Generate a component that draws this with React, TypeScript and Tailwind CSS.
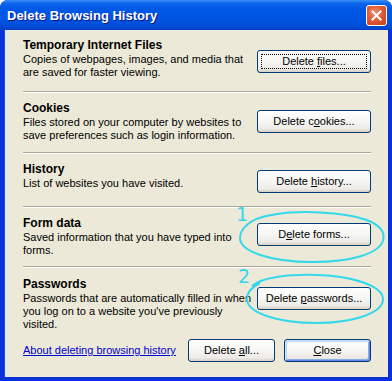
import type { ReactNode } from "react";

type BtnProps = {
  children: ReactNode;
  className?: string;
  focused?: boolean;
  isDefault?: boolean;
};

function XpButton({ children, className = "", focused, isDefault }: BtnProps) {
  return (
    <button
      className={
        "relative flex h-[23px] items-center justify-center rounded-[3px] border border-[#003c74] bg-[linear-gradient(180deg,#ffffff_0%,#f7f7f4_45%,#ecebe6_85%,#d6d0c5_100%)] text-[11px] leading-none text-black " +
        (isDefault
          ? "shadow-[inset_1px_1px_0_#cee7ff,inset_-1px_-1px_0_#6982ee,inset_2px_2px_0_#bcd4f6,inset_-2px_-2px_0_#89ade4] "
          : "") +
        className
      }
    >
      {focused && (
        <span className="pointer-events-none absolute inset-[3px] border border-dotted border-black" />
      )}
      <span className="relative">{children}</span>
    </button>
  );
}

function Separator() {
  return <div className="h-[2px] border-t border-[#aca899] bg-white" />;
}

type SectionProps = {
  title: string;
  lines: string[];
  button: ReactNode;
  height: string;
  pad: string;
  btnOffset: string;
};

function Section({ title, lines, button, height, pad, btnOffset }: SectionProps) {
  return (
    <div className={`flex justify-between ${height} ${pad}`}>
      <div className="whitespace-nowrap">
        <div className="text-[12px] font-bold leading-[14px]">{title}</div>
        <div className="mt-[1px] leading-[13px]">
          {lines.map((l) => (
            <div key={l}>{l}</div>
          ))}
        </div>
      </div>
      <div className={btnOffset}>{button}</div>
    </div>
  );
}

export default function App() {
  return (
    <div className="relative h-[381px] w-[392px] bg-white font-['Liberation_Sans',Arial,sans-serif] text-[11px] text-black">
      <div className="flex h-full flex-col overflow-hidden rounded-t-[8px] bg-[#0831d9]">
        {/* Title bar */}
        <div className="flex h-[30px] shrink-0 items-center justify-between bg-[linear-gradient(180deg,#3d8ef8_0%,#0a63ea_12%,#0058e6_30%,#0055e3_60%,#004fd8_85%,#003fc4_100%)] pl-[7px] pr-[5px]">
          <span className="text-[13px] font-bold leading-none text-white [text-shadow:1px_1px_0_#0a1883]">
            Delete Browsing History
          </span>
          <div className="flex h-[21px] w-[21px] items-center justify-center rounded-[3px] border border-white bg-[radial-gradient(circle_at_40%_35%,#f0906e_0%,#e25a36_45%,#c6401c_100%)]">
            <svg width="11" height="11" viewBox="0 0 11 11">
              <path d="M1.5 1.5 L9.5 9.5 M9.5 1.5 L1.5 9.5" stroke="white" strokeWidth="2" strokeLinecap="square" />
            </svg>
          </div>
        </div>

        {/* Body */}
        <div className="mx-[4px] mb-[4px] flex flex-1 flex-col border-l border-[#0058ee] bg-[#ece9d8] pl-[18px] pr-[17px]">
          <Section
            title="Temporary Internet Files"
            lines={["Copies of webpages, images, and media that", "are saved for faster viewing."]}
            height="h-[61px]"
            pad="pt-[8px]"
            btnOffset="mt-[12px]"
            button={
              <XpButton className="w-[114px]" focused>
                Delete <u>f</u>iles...
              </XpButton>
            }
          />
          <Separator />
          <Section
            title="Cookies"
            lines={["Files stored on your computer by websites to", "save preferences such as login information."]}
            height="h-[59px]"
            pad="pt-[8px]"
            btnOffset="mt-[9px]"
            button={
              <XpButton className="w-[114px]">
                Delete c<u>o</u>okies...
              </XpButton>
            }
          />
          <Separator />
          <Section
            title="History"
            lines={["List of websites you have visited."]}
            height="h-[52px]"
            pad="pt-[8px]"
            btnOffset="mt-[8px]"
            button={
              <XpButton className="w-[114px]">
                Delete <u>h</u>istory...
              </XpButton>
            }
          />
          <Separator />
          <Section
            title="Form data"
            lines={["Saved information that you have typed into", "forms."]}
            height="h-[58px]"
            pad="pt-[8px]"
            btnOffset="mt-[7px]"
            button={
              <XpButton className="w-[114px]">
                D<u>e</u>lete forms...
              </XpButton>
            }
          />
          <Separator />
          <Section
            title="Passwords"
            lines={[
              "Passwords that are automatically filled in when",
              "you log on to a website you've previously",
              "visited.",
            ]}
            height="h-[71px]"
            pad="pt-[9px]"
            btnOffset="mt-[10px]"
            button={
              <XpButton className="w-[114px]">
                Delete <u>p</u>asswords...
              </XpButton>
            }
          />

          {/* Footer */}
          <div className="flex h-[23px] items-center justify-between">
            <span className="text-[#0000cc] underline">About deleting browsing history</span>
            <div className="flex gap-[9px]">
              <XpButton className="w-[87px]">
                Delete <u>a</u>ll...
              </XpButton>
              <XpButton className="w-[87px]" isDefault>
                <u>C</u>lose
              </XpButton>
            </div>
          </div>
        </div>
      </div>

      {/* Hand-drawn annotations */}
      <svg className="pointer-events-none absolute left-0 top-0" width="392" height="381">
        <path
          d="M246 226 C256 214 290 211 320 212.5 C356 214 385 222 383.5 238 C382 254 350 262 312 262 C272 262 240 252 240 238 C240 231 244 226 252 221"
          fill="none"
          stroke="#35d8ea"
          strokeWidth="2"
        />
        <path
          d="M252 286 C262 277 290 274 318 275 C352 276 383 286 383 299 C383 313 354 323 316 323 C278 323 247 313 247 299 C247 292 252 287 260 283"
          fill="none"
          stroke="#35d8ea"
          strokeWidth="2"
        />
      </svg>
      <span className="pointer-events-none absolute left-[236px] top-[205px] font-['DejaVu_Sans',sans-serif] text-[19px] leading-none text-[#35d8ea]">
        1
      </span>
      <span className="pointer-events-none absolute left-[238px] top-[267px] font-['DejaVu_Sans',sans-serif] text-[19px] leading-none text-[#35d8ea]">
        2
      </span>
    </div>
  );
}
